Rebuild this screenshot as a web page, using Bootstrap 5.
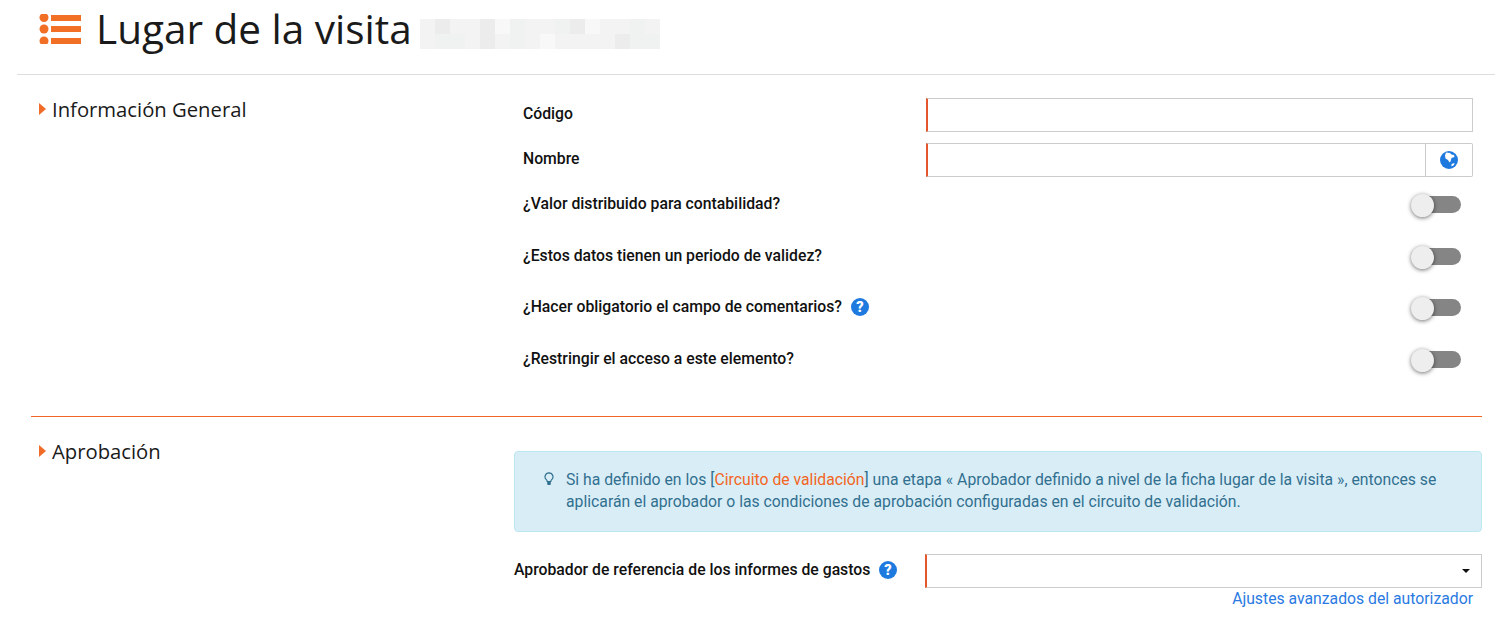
<!DOCTYPE html>
<html lang="es">
<head>
<meta charset="utf-8">
<title>Lugar de la visita</title>
<link href="https://cdn.jsdelivr.net/npm/bootstrap@5.3.0/dist/css/bootstrap.min.css" rel="stylesheet">
<style>
html,body{height:638px;overflow:hidden}
body{font-family:Roboto,"Liberation Sans",sans-serif;font-size:15.75px;color:#111;background:#fff}
.page-wrap{margin:0 8px 0 17px}
.page-head{height:75px;border-bottom:1px solid #ddd;padding:6px 0 0 22px}
.head-icon{margin:8px 15px 0 0;flex:none}
.head-title{font-family:"Open Sans","Liberation Sans",sans-serif;font-size:40.5px;line-height:46px;font-weight:400;color:#1a1a1a;margin:0}
.mosaic{width:240px;height:30px;margin:13px 0 0 8px;display:block;flex:none}
.sect{margin:0 13px 0 14px}
.sect-one{padding-top:23px;height:341px}
.sect-line{height:1px;background:#f26522;margin:0 13px 0 14px}
.sect-two{padding-top:34px}
.sect-left{width:483px;flex:none;padding-left:8px}
.sect-one .sect-title{margin-top:-1px}
.sect-two .sect-title{margin-top:-12px}
.sect-title{font-family:"Open Sans","Liberation Sans",sans-serif;font-size:20.25px;line-height:24px;font-weight:400;color:#1a1a1a;margin:0;gap:6px}
.tri{width:0;height:0;border-left:7px solid #ef6c28;border-top:6.5px solid transparent;border-bottom:6.5px solid transparent}
.sect-right{width:968px;flex:none}
.f-row{padding:0 9px;margin-bottom:11px;height:34px}
.f-label{width:403px;flex:none;font-weight:500;margin:0;gap:9px;position:relative;top:-1px}
.f-field{flex:1;min-width:0}
.inp{height:34px;border:1px solid #ccc;border-left:2px solid #e4572e;background:#fff;width:100%;display:block;padding:0 8px;outline:0;border-radius:0}
.globe-btn{width:47px;height:34px;flex:none;border:1px solid #ccc;border-left:0;border-radius:0 2px 2px 0;background:#fff;padding:0}
.t-row{padding:0 21px 0 9px;height:51.67px;margin:0}
.t-row .f-label{top:5px;width:auto;line-height:21px}
.sw{width:46px;height:17px;background:#858585;border-radius:9px;position:relative;margin-top:-1px}
.sw-knob{position:absolute;left:-4px;top:-2px;width:23px;height:23px;border-radius:50%;background:#eee;box-shadow:0 1px 4px rgba(0,0,0,.55)}
.tip{background:#d9edf7;border:1px solid #bce8f1;border-radius:4px;color:#31708f;height:81px;padding:17px 30px 0 29px;font-size:15.75px;line-height:22px;gap:12px;margin-bottom:22px}
.tip a{color:#f26522;text-decoration:none}
.tip-ic{flex:none;margin-top:3px}
.a-label{width:411px;flex:none;font-weight:500;margin:0;gap:9px;position:relative;top:-1px}
.sel{flex:1;height:34px;border:1px solid #ccc;border-left:2px solid #e4572e;position:relative;background:#fff}
.caret-dn{position:absolute;right:11px;top:14px;width:0;height:0;border-top:4px solid #111;border-left:4px solid transparent;border-right:4px solid transparent}
.adv-wrap{margin-top:-1px}
.adv-link{color:#2a7ae2;text-decoration:none;font-size:15.75px;line-height:20px;padding-right:9px}
</style>
</head>
<body>
<div class="page-wrap">
  <header class="page-head d-flex align-items-start">
    <svg class="head-icon" width="42" height="30" viewBox="0 0 42 30" aria-hidden="true">
      <g fill="#f26f26"><circle cx="5" cy="3.500" r="4.500"/><circle cx="5" cy="15" r="4.500"/><circle cx="5" cy="27" r="4.500"/>
      <rect x="12" y="1" width="30" height="6"/><rect x="12" y="12" width="30" height="6"/><rect x="12" y="24" width="30" height="6"/></g>
    </svg>
    <h1 class="head-title">Lugar de la visita</h1>
    <svg class="mosaic" viewBox="0 0 240 30" aria-hidden="true">
      <rect width="240" height="30" fill="#f3f3f3"/>
      <g fill="#ececec"><rect x="15" width="15" height="15"/><rect x="60" width="15" height="15"/><rect x="150" width="15" height="15"/><rect x="60" y="15" width="15" height="15"/><rect x="195" y="15" width="15" height="15"/></g>
      <g fill="#f0f1f1"><rect x="90" width="15" height="15"/><rect x="210" width="15" height="15"/><rect x="15" y="15" width="30" height="15"/><rect x="90" y="15" width="15" height="15"/><rect x="135" width="15" height="15"/><rect x="210" y="15" width="30" height="15"/></g>
      <g fill="#f7f8f7"><rect x="75" width="15" height="15"/><rect x="165" width="15" height="15"/><rect x="120" y="15" width="15" height="15"/></g>
    </svg>
  </header>

  <section class="sect sect-one d-flex">
    <div class="sect-left">
      <h2 class="sect-title d-flex align-items-center"><span class="tri"></span>Información General</h2>
    </div>
    <div class="sect-right">
      <div class="f-row d-flex align-items-center">
        <label class="f-label d-flex align-items-center">Código</label>
        <div class="f-field"><input class="inp" type="text" aria-label="Código"></div>
      </div>
      <div class="f-row d-flex align-items-center">
        <label class="f-label d-flex align-items-center">Nombre</label>
        <div class="f-field d-flex">
          <input class="inp" type="text" aria-label="Nombre">
          <button class="globe-btn d-flex align-items-center justify-content-center" type="button" aria-label="Idiomas">
            <svg width="18" height="18" viewBox="0 0 18 18"><circle cx="9" cy="9" r="9" fill="#1f7ae0"/><path d="M6 1.500 10 2l1.500 1.500L14 4l.5 2-3 1-1 3.500-1 1L8 9 5.500 7.500 5 4.500z" fill="#fff"/><path d="M11.500 13l3-1-.5 2-2.500 1.500z" fill="#fff"/></svg>
          </button>
        </div>
      </div>
      <div class="t-row d-flex align-items-start justify-content-between">
        <span class="f-label">¿Valor distribuido para contabilidad?</span>
        <span class="sw mt-2"><span class="sw-knob"></span></span>
      </div>
      <div class="t-row d-flex align-items-start justify-content-between">
        <span class="f-label">¿Estos datos tienen un periodo de validez?</span>
        <span class="sw mt-2"><span class="sw-knob"></span></span>
      </div>
      <div class="t-row d-flex align-items-start justify-content-between">
        <span class="f-label d-flex align-items-center">¿Hacer obligatorio el campo de comentarios?
          <svg width="18" height="18" viewBox="0 0 18 18" aria-hidden="true"><circle cx="9" cy="9" r="9" fill="#1f7ae0"/><text x="9" y="14" text-anchor="middle" font-family="Roboto,sans-serif" font-weight="900" font-size="14.500" fill="#fff">?</text></svg>
        </span>
        <span class="sw mt-2"><span class="sw-knob"></span></span>
      </div>
      <div class="t-row d-flex align-items-start justify-content-between">
        <span class="f-label">¿Restringir el acceso a este elemento?</span>
        <span class="sw mt-2"><span class="sw-knob"></span></span>
      </div>
    </div>
  </section>
  <div class="sect-line"></div>

  <section class="sect sect-two d-flex">
    <div class="sect-left">
      <h2 class="sect-title d-flex align-items-center"><span class="tri"></span>Aprobación</h2>
    </div>
    <div class="sect-right">
      <div class="tip d-flex">
        <svg class="tip-ic" width="10" height="14" viewBox="0 0 10 14" aria-hidden="true"><path d="M5 .8a4 4 0 0 0-2.500 7.100c.5.5.7 1 .7 1.600h3.600c0-.6.2-1.100.7-1.600A4 4 0 0 0 5 .8z" fill="none" stroke="#31708f" stroke-width="1.200"/><rect x="3.200" y="9.500" width="3.600" height="3.500" rx="1" fill="#31708f"/></svg>
        <div>Si ha definido en los [<a href="#">Circuito de validación</a>] una etapa « Aprobador definido a nivel de la ficha lugar de la visita », entonces se aplicarán el aprobador o las condiciones de aprobación configuradas en el circuito de validación.</div>
      </div>
      <div class="d-flex align-items-center">
        <label class="a-label d-flex align-items-center">Aprobador de referencia de los informes de gastos
          <svg width="18" height="18" viewBox="0 0 18 18" aria-hidden="true"><circle cx="9" cy="9" r="9" fill="#1f7ae0"/><text x="9" y="14" text-anchor="middle" font-family="Roboto,sans-serif" font-weight="900" font-size="14.500" fill="#fff">?</text></svg>
        </label>
        <div class="sel"><span class="caret-dn"></span></div>
      </div>
      <div class="text-end adv-wrap"><a class="adv-link" href="#">Ajustes avanzados del autorizador</a></div>
    </div>
  </section>
</div>
</body>
</html>
